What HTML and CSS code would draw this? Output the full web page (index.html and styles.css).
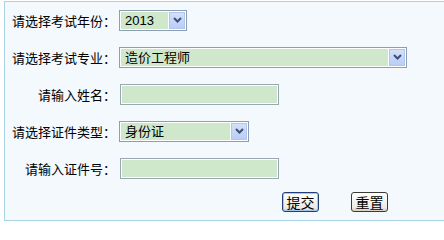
FILE: index.html
```html
<!DOCTYPE html>
<html lang="zh">
<head>
<meta charset="utf-8">
<link rel="stylesheet" href="styles.css">
</head>
<body>
<div class="panel">
  <div class="row">
    <span class="label">请选择考试年份：</span>
    <div class="select w-year"><span class="value">2013</span><span class="arrow"><svg width="9" height="6" viewBox="0 0 9 6"><path d="M1 1 L4.5 4.5 L8 1" fill="none" stroke="#3d4f73" stroke-width="2"/></svg></span></div>
  </div>
  <div class="row">
    <span class="label">请选择考试专业：</span>
    <div class="select w-major"><span class="value">造价工程师</span><span class="arrow"><svg width="9" height="6" viewBox="0 0 9 6"><path d="M1 1 L4.5 4.5 L8 1" fill="none" stroke="#3d4f73" stroke-width="2"/></svg></span></div>
  </div>
  <div class="row">
    <span class="label">请输入姓名：</span>
    <div class="input"></div>
  </div>
  <div class="row">
    <span class="label">请选择证件类型：</span>
    <div class="select w-id"><span class="value">身份证</span><span class="arrow"><svg width="9" height="6" viewBox="0 0 9 6"><path d="M1 1 L4.5 4.5 L8 1" fill="none" stroke="#3d4f73" stroke-width="2"/></svg></span></div>
  </div>
  <div class="row">
    <span class="label">请输入证件号：</span>
    <div class="input"></div>
  </div>
  <div class="buttons">
    <button class="btn btn-primary">提交</button>
    <button class="btn">重置</button>
  </div>
</div>
</body>
</html>
```
FILE: styles.css
```css
html, body {
  margin: 0;
  padding: 0;
  background: #ffffff;
}
body {
  font-family: "Noto Sans CJK SC", "Liberation Sans", sans-serif;
  font-size: 13px;
  color: #000;
  overflow: hidden;
}
.panel {
  margin: 1px 0 0 4px;
  width: 460px;
  height: 220px;
  box-sizing: border-box;
  border: 1px solid #a8d3e6;
  background: #f3f9fd;
  padding-top: 7px;
  display: flex;
  flex-direction: column;
  gap: 15px;
}
.row {
  display: flex;
  align-items: center;
  height: 22px;
}
.label {
  width: 111px;
  text-align: right;
  padding-right: 3px;
  white-space: nowrap;
  line-height: 13px;
  font-size: 13px;
}
.select {
  box-sizing: border-box;
  height: 21px;
  border: 1px solid #8c9eb4;
  padding: 1px;
  background: #fff;
  display: flex;
  gap: 1px;
}
.w-year { width: 68px; }
.w-major { width: 288px; }
.w-id { width: 130px; }
.value {
  flex: 1;
  background: #cfe8cc;
  font-size: 13px;
  line-height: 17px;
  padding-left: 4px;
  font-family: "Liberation Sans", "Noto Sans CJK SC", sans-serif;
}
.arrow {
  width: 16px;
  background: linear-gradient(#d3e0fb, #b9cdf7);
  border: 1px solid #b2c4ef;
  box-sizing: border-box;
  display: flex;
  align-items: center;
  justify-content: center;
}
.input {
  box-sizing: border-box;
  margin-left: 1px;
  width: 159px;
  height: 21px;
  border: 1px solid #9aa6b2;
  padding: 1px;
  background: #fff;
}
.input::after {
  content: "";
  display: block;
  height: 100%;
  background: #cfe8cc;
}
.buttons {
  display: flex;
  height: 20px;
  margin-top: -2px;
  align-items: center;
  padding-left: 277px;
  gap: 32px;
}
.btn {
  font-family: "Noto Sans CJK SC", sans-serif;
  font-size: 14px;
  line-height: 14px;
  height: 20px;
  width: 37px;
  padding: 0;
  border: 1px solid #3b3b3b;
  border-radius: 3px;
  background: linear-gradient(#ffffff, #ecebe6 80%, #d6d0c5);
  color: #000;
}
.btn-primary {
  border-color: #1f3f7a;
  box-shadow: inset 0 0 0 1px #a9c4f0;
}
```
